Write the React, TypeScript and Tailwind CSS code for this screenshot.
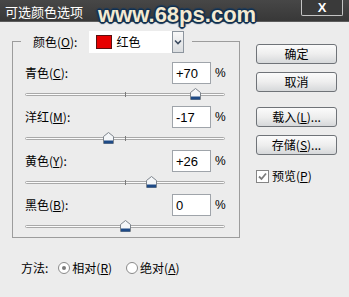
import React from "react";

function Thumb({ v }: { v: number }) {
  return (
    <svg
      width="11"
      height="12"
      viewBox="0 0 11 12"
      className="absolute top-[4px]"
      style={{ left: `${100 + v - 5.5}px` }}
    >
      <path d="M5.5 0.5 L10.5 4.5 V11.5 H0.5 V4.5 Z" fill="#f4f6f8" stroke="#7d848c" />
      <rect x="1" y="8.5" width="9" height="3" fill="#1e4a86" />
    </svg>
  );
}

function Row({ label, k, value, v }: { label: string; k: string; value: string; v: number }) {
  return (
    <div className="flex flex-col">
      <div className="flex items-center h-[22px]">
        <div className="w-[147px] leading-[14px]">
          {label}(<span className="underline">{k}</span>):
        </div>
        <div className="w-[39px] h-[22px] bg-white border border-[#9fa4aa] flex items-center pl-[3px] text-[13px] font-['Liberation_Sans',sans-serif] leading-none">
          {value}
        </div>
        <div className="ml-[4px] text-[12px] font-['Liberation_Sans',sans-serif]">%</div>
      </div>
      <div className="relative h-[22px] w-[200px]">
        <div className="absolute left-0 top-[9px] w-[200px] h-[3px] rounded-full border border-[#a9a9a9] bg-[#fbfbfb]" />
        <div className="absolute left-[100px] top-[8px] w-px h-[5px] bg-[#7b7b7b]" />
        <Thumb v={v} />
      </div>
    </div>
  );
}

function Btn({ children }: { children: React.ReactNode }) {
  return (
    <div className="w-[81px] h-[20px] rounded-[3px] border border-[#6f7378] bg-gradient-to-b from-[#fbfbfb] via-[#eeeeee] to-[#d6d8da] flex items-center justify-center leading-[14px]">
      {children}
    </div>
  );
}

export default function App() {
  return (
    <div className="w-[349px] h-[297px] bg-[#ececec] relative overflow-hidden font-['Noto_Sans_CJK_SC','Noto_Sans',sans-serif] text-[12px] text-black">
      {/* title bar */}
      <div className="h-[22px] bg-gradient-to-b from-[#474747] to-[#383838] border-b border-[#5c5c5c] flex items-start">
        <span className="ml-[5px] mt-[4px] text-white text-[13px] leading-[15px]">可选颜色选项</span>
        <div className="ml-auto mr-[6px] w-[42px] h-[16px] border border-t-0 border-[#c4c4c4] rounded-b-[2px] bg-[#3a3a3a] flex items-center justify-center text-white font-['Liberation_Sans',sans-serif] font-bold text-[13px] leading-none">
          X
        </div>
      </div>
      {/* watermark */}
      <div className="absolute left-[98px] top-[3px] text-[22px] leading-[24px] font-bold font-['Liberation_Sans',sans-serif] text-[#f3ead2] [text-shadow:0_0_2px_#12304f,1px_1px_0_#12304f,-1px_-1px_0_#12304f,1px_-1px_0_#12304f,-1px_1px_0_#12304f,2px_0_1px_#1b3a5c,-2px_0_1px_#1b3a5c,0_2px_1px_#1b3a5c,0_-2px_1px_#1b3a5c]">
        www.68ps.com
      </div>

      <div className="flex">
        {/* left column */}
        <div className="ml-[12px] mt-[19px] w-[228px] flex flex-col">
          <div className="h-[197px] border border-[#9c9c9c] flex flex-col pl-[12px]">
            <div className="-mt-[11px] -ml-[4px] self-start bg-[#ececec] pl-[12px] pr-[8px] flex items-center h-[22px]">
              <span className="leading-[14px]">
                颜色(<span className="underline">O</span>):
              </span>
              <div className="ml-[12px] w-[95px] h-[22px] bg-white flex items-center relative">
                <div className="ml-[7px] w-[16px] h-[14px] bg-[#e60000] border border-[#5a1010]" />
                <span className="ml-[4px] leading-[14px]">红色</span>
                <div className="absolute right-0 top-0 w-[12px] h-[22px] border border-[#8d959e] bg-gradient-to-b from-[#f8f8f8] to-[#dadde0] flex items-center justify-center">
                  <svg width="8" height="6" viewBox="0 0 8 6">
                    <path d="M1 1.5 L4 4.5 L7 1.5" fill="none" stroke="#3c4b60" strokeWidth="1.6" />
                  </svg>
                </div>
              </div>
            </div>
            <div className="mt-[9px] flex flex-col">
              <Row label="青色" k="C" value="+70" v={70} />
              <Row label="洋红" k="M" value="-17" v={-17} />
              <Row label="黄色" k="Y" value="+26" v={26} />
              <Row label="黑色" k="B" value="0" v={0} />
            </div>
          </div>
          <div className="mt-[22px] ml-[9px] flex items-center h-[16px] leading-[14px]">
            <span>方法:</span>
            <div className="ml-[10px] w-[12px] h-[12px] rounded-full border border-[#8a8a8a] bg-white flex items-center justify-center">
              <div className="w-[4px] h-[4px] rounded-full bg-[#7a7a7a]" />
            </div>
            <span className="ml-[2px]">
              相对(<span className="underline">R</span>)
            </span>
            <div className="ml-[14px] w-[12px] h-[12px] rounded-full border border-[#8a8a8a] bg-white" />
            <span className="ml-[2px]">
              绝对(<span className="underline">A</span>)
            </span>
          </div>
        </div>

        {/* right column */}
        <div className="ml-[16px] mt-[22px] flex flex-col">
          <Btn>确定</Btn>
          <div className="mt-[8px]">
            <Btn>取消</Btn>
          </div>
          <div className="mt-[15px]">
            <Btn>
              载入(<span className="underline">L</span>)...
            </Btn>
          </div>
          <div className="mt-[8px]">
            <Btn>
              存储(<span className="underline">S</span>)...
            </Btn>
          </div>
          <div className="mt-[14px] flex items-center leading-[14px]">
            <div className="w-[13px] h-[13px] border border-[#858585] bg-white flex items-center justify-center">
              <svg width="9" height="9" viewBox="0 0 9 9">
                <path d="M1 4.5 L3.5 7 L8 1.5" fill="none" stroke="#7c7c7c" strokeWidth="1.8" />
              </svg>
            </div>
            <span className="ml-[3px]">
              预览(<span className="underline">P</span>)
            </span>
          </div>
        </div>
      </div>
    </div>
  );
}
